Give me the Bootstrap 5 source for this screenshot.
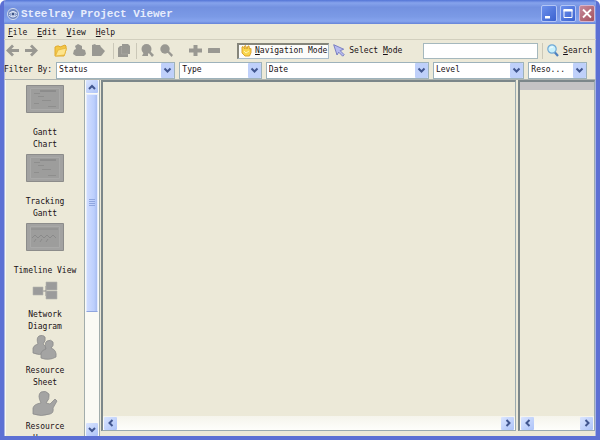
<!DOCTYPE html>
<html lang="en">
<head>
<meta charset="utf-8">
<meta name="viewport" content="width=device-width, initial-scale=1">
<title>Steelray Project Viewer</title>
<link href="https://cdn.jsdelivr.net/npm/bootstrap@5.3.0/dist/css/bootstrap.min.css" rel="stylesheet">
<style>
body { font-family: "DejaVu Sans Mono", "Liberation Mono", monospace; font-size: 8px; line-height: 12px; color: #181014; background: #fff; }
button, input, select { font: inherit; color: inherit; }
svg { display: block; flex: none; }
.app-window { background: #ece9d8; border: 4px solid #5c70d4; border-top: 0; border-radius: 6px 6px 0 0; box-shadow: inset 1px 0 #a9b4e0, inset -1px 0 #a9b4e0; }
.title-strip { height: 24px; margin: 0 -4px; padding: 3px 5px 0 7px; background: linear-gradient(#5374d6, #86a3ec 12%, #7391e0 30%, #7b9ae6 70%, #86a4ee 88%, #6683d8); color: #e6ecfc; gap: 2px; }
.title-text { font-family: "Liberation Mono", monospace; font-size: 11px; font-weight: 700; margin: 0; line-height: 16px; }
.win-btns { gap: 3px; }
.win-btn { width: 16px; height: 17px; padding: 0; border: 1px solid #b4c6f6; border-radius: 2px; background: linear-gradient(135deg, #6c90ec, #3b62cf); }
.win-btn.win-close { background: linear-gradient(135deg, #c68a9c, #a4525e); border-color: #d6b4cc; }
.menu-strip { height: 16px; padding: 3px 4px 0; border-bottom: 1px solid #d2cfbe; gap: 10px; }
.menu-strip a { color: inherit; text-decoration: none; }
.tool-strip { height: 21px; padding: 0 4px 0 2px; color: #999892; }
.tool-group { gap: 6px; }
.tool-btn { border: 0; background: none; padding: 0; color: inherit; }
.tool-sep { width: 1px; height: 16px; background: #cbc8b8; }
.text-btn { color: #181014; gap: 4px; }
.nav-mode { background: #fcfcfa; border: 1px solid #a9bccb; border-top: 2px solid #85857a; border-left: 2px solid #85857a; height: 16px; padding: 0 1px 0 2px; gap: 3px; }
.search-box { flex: 0 1 115px; min-width: 0; height: 16px; border: 1px solid #a5b8bd; background: #fff; padding: 0 3px; border-radius: 0; }
.filter-strip { height: 18px; padding: 0 9px 0 0; gap: 4px; }
.filter-label { width: 48px; flex: none; white-space: nowrap; }
.combo { min-width: 0; height: 17px; }
.combo select { appearance: none; width: 100%; height: 17px; border: 1px solid #9db2bb; background: #fff; border-radius: 0; padding: 0 14px 0 2px; display: block; }
.combo svg { position: absolute; right: 1px; top: 1px; pointer-events: none; }
.c-status { flex: 120 1 0; } .c-type { flex: 83 1 0; } .c-date { flex: 164 1 0; } .c-level { flex: 92 1 0; } .c-res { flex: 59 1 0; }
.work-area { min-height: 0; border-top: 1px solid #aeb4b0; }
.side-pane { width: 95px; flex: none; border-left: 1px solid #f8f8f4; margin: 0 1px; }
.view-list { padding-top: 4px; gap: 2px; }
.view-list button { border: 0; background: none; padding: 0; width: 78px; display: flex; flex-direction: column; align-items: center; color: inherit; flex: none; }
.v-bar { width: 16px; border-left: 1px solid #a2adac; border-right: 1px solid #a2adac; background: #fafaf4; padding: 0 1px; flex: none; }
.v-thumb { height: 218px; margin-top: 1px; background: linear-gradient(90deg, #cfdcff, #bccffd 70%, #a9bdf0); border: 1px solid #e4ecff; border-bottom-color: #8fa5de; color: #8fa6df; }
.arrow-btn { padding: 0; border: 0; background: linear-gradient(135deg, #dae5ff, #adc3f8); color: #41568f; width: 13px; height: 13px; display: flex; align-items: center; justify-content: center; flex: none; border-radius: 1px; }
.doc-pane { min-width: 0; border: 1px solid #9aaab0; border-top: 2px solid #7c878a; border-left: 2px solid #7c878a; margin: 0 2px 5px 0; }
.h-bar { height: 14px; background: linear-gradient(#f5f4ec, #fefefb); padding: 0 1px; }
.detail-pane { width: 77px; flex: none; margin-right: 1px; }
.detail-head { height: 8px; background: #c4c3c4; }
</style>
</head>
<body>
<div class="app-window vh-100 d-flex flex-column overflow-hidden">
  <header class="title-strip d-flex align-items-center flex-shrink-0">
    <svg width="12" height="12" viewBox="0 0 12 12" fill="none"><circle cx="6" cy="6" r="5.5" fill="#6e86bd" stroke="#d2dcef"/><path d="M2 5.5Q6 1.5 10 5.5M2 7Q6 11 10 7" stroke="#e8eefc"/><circle cx="6" cy="6" r="2" fill="#3d5488" stroke="#dce6f8"/></svg>
    <h1 class="title-text">Steelray Project Viewer</h1>
    <div class="win-btns d-flex ms-auto">
      <button class="win-btn" aria-label="Minimize"><svg width="14" height="15" viewBox="0 0 14 15"><path d="M3 10h5v2.5H3z" fill="#fff"/></svg></button>
      <button class="win-btn" aria-label="Maximize"><svg width="14" height="15" viewBox="0 0 14 15"><path d="M3 4h8v7.5H3z" fill="none" stroke="#fff"/><path d="M2.5 3h9v2.5h-9z" fill="#fff"/></svg></button>
      <button class="win-btn win-close" aria-label="Close"><svg width="14" height="15" viewBox="0 0 14 15"><path d="M3 3.5l8 8M11 3.5l-8 8" stroke="#fff" stroke-width="1.8"/></svg></button>
    </div>
  </header>
  <nav class="menu-strip d-flex flex-shrink-0" aria-label="Main menu">
    <a href="#"><u>F</u>ile</a><a href="#"><u>E</u>dit</a><a href="#"><u>V</u>iew</a><a href="#"><u>H</u>elp</a>
  </nav>
  <div class="tool-strip d-flex align-items-center flex-shrink-0">
    <div class="tool-group d-flex">
      <button class="tool-btn" aria-label="Back"><svg width="13" height="13" viewBox="0 0 13 13"><path d="M7 1.5L2 6.5l5 5M2.5 6.5H13" fill="none" stroke="currentColor" stroke-width="2.8"/></svg></button>
      <button class="tool-btn" aria-label="Forward"><svg width="13" height="13" viewBox="0 0 13 13"><path d="M6 1.5l5 5-5 5M10.5 6.5H0" fill="none" stroke="currentColor" stroke-width="2.8"/></svg></button>
    </div>
    <div class="tool-group d-flex ms-3">
      <button class="tool-btn" aria-label="Open"><svg width="13" height="13" viewBox="0 0 13 13"><path d="M1 12V3l2-1h2l1 1 5-2 1 1v4l-2 6z" fill="#f3c746" stroke="#e0a92e"/><path d="M1.5 12L4 6l8.5-2-2 7z" fill="#fde48c" stroke="#e5b43b" stroke-width=".8"/></svg></button>
      <button class="tool-btn" aria-label="Export project"><svg width="13" height="13" viewBox="0 0 13 13" fill="currentColor"><path d="M2 2l3-2 4 2v3l3 1 1 4-2 2H3L0 10l1-4 2-1z"/></svg></button>
      <button class="tool-btn" aria-label="Export page"><svg width="13" height="13" viewBox="0 0 13 13" fill="currentColor"><path d="M0 1l3-1 1 1h4l1 2 1 1 3 3-3 4-1 1H0z"/></svg></button>
    </div>
    <span class="tool-sep ms-2"></span>
    <button class="tool-btn mx-1" aria-label="Copy"><svg width="14" height="13" viewBox="0 0 14 13" fill="currentColor"><path d="M4 0h6l2 2v8h-2v3H0V4l2-2h2z"/><path d="M3.500 3v7H10" fill="none" stroke="#b0afa8" stroke-width=".6"/></svg></button>
    <span class="tool-sep me-1"></span>
    <div class="tool-group d-flex">
      <button class="tool-btn" aria-label="Zoom in"><svg width="13" height="13" viewBox="0 0 13 13" fill="currentColor"><circle cx="5.5" cy="5" r="5"/><path d="M3 8h4v4H1zM7 8l2-1 4 4-2 2z"/></svg></button>
      <button class="tool-btn" aria-label="Zoom out"><svg width="13" height="13" viewBox="0 0 13 13" fill="currentColor"><circle cx="5" cy="5" r="4.7"/><path d="M7 8l1.5-1.5L13 11l-1.5 2z"/></svg></button>
    </div>
    <div class="tool-group d-flex ms-3">
      <button class="tool-btn" aria-label="Add"><svg width="13" height="13" viewBox="0 0 13 13" fill="currentColor"><path d="M4.5 1h4v3.500H13v4H8.500V12h-4V8.500H0v-4h4.500z"/></svg></button>
      <button class="tool-btn" aria-label="Remove"><svg width="13" height="13" viewBox="0 0 13 13" fill="currentColor"><rect y="4" width="12" height="5" rx=".5"/></svg></button>
    </div>
    <button class="tool-btn text-btn nav-mode d-flex align-items-center ms-3"><svg width="11" height="12" viewBox="0 0 11 12"><path d="M1 2l1-.5L4 4l-.5-3 1-.5L6 4l1-3h1l.5 3L10 3.500v4L8.500 11H4L1 8z" fill="#f9d64d" stroke="#d99c26" stroke-width=".9"/><path d="M3 6l2 2 3-2" fill="none" stroke="#fff3b0"/></svg><span><u>N</u>avigation Mode</span></button>
    <button class="tool-btn text-btn d-flex align-items-center ms-1"><svg width="12" height="13" viewBox="0 0 12 13"><path d="M.7.7l10 4.500-3.500 1.500 4 4-1.500 1.500-4-4L4 11z" fill="#b8bcf0" stroke="#7277bd" stroke-width=".9"/></svg><span>Select <u>M</u>ode</span></button>
    <input class="search-box ms-auto" type="text" aria-label="Search text">
    <span class="tool-sep ms-1 me-1"></span>
    <button class="tool-btn text-btn d-flex align-items-center"><svg width="12" height="13" viewBox="0 0 12 13"><path d="M7.500 8l3.500 4" stroke="#4f80bd" stroke-width="2.200"/><circle cx="5" cy="5" r="4.200" fill="#c9f1fc" stroke="#6fa8d6" stroke-width="1.200"/><path d="M3 4.500Q4 2.500 6 3" stroke="#fff" fill="none"/></svg><span><u>S</u>earch</span></button>
  </div>
  <div class="filter-strip d-flex align-items-center flex-shrink-0">
    <label class="filter-label" for="f-status">Filter By:</label>
    <div class="combo c-status position-relative"><select id="f-status"><option>Status</option></select><svg width="13" height="15" viewBox="0 0 13 15"><use href="#drop"/></svg></div>
    <div class="combo c-type position-relative"><select aria-label="Type"><option>Type</option></select><svg width="13" height="15" viewBox="0 0 13 15"><use href="#drop"/></svg></div>
    <div class="combo c-date position-relative"><select aria-label="Date"><option>Date</option></select><svg width="13" height="15" viewBox="0 0 13 15"><use href="#drop"/></svg></div>
    <div class="combo c-level position-relative"><select aria-label="Level"><option>Level</option></select><svg width="13" height="15" viewBox="0 0 13 15"><use href="#drop"/></svg></div>
    <div class="combo c-res position-relative"><select aria-label="Resource"><option>Reso...</option></select><svg width="13" height="15" viewBox="0 0 13 15"><use href="#drop"/></svg></div>
  </div>
  <main class="work-area d-flex flex-grow-1">
    <aside class="side-pane d-flex">
      <div class="view-list d-flex flex-column flex-grow-1 overflow-hidden">
        <button><svg width="38" height="43" viewBox="0 0 38 43"><use href="#frame"/><use href="#bars"/></svg><span>Gantt<br>Chart</span></button>
        <button><svg width="38" height="43" viewBox="0 0 38 43"><use href="#frame"/><use href="#bars"/></svg><span>Tracking<br>Gantt</span></button>
        <button><svg width="38" height="43" viewBox="0 0 38 43"><use href="#frame"/><path d="M5 7h27" stroke="#8c8c8c"/><path d="M6 16l3-3 3 3 3-3 3 3 3-3 3 3 3-3 3 3M8 20l2-3M14 20l2-3M20 20l2-3" stroke="#8a8a8a" fill="none"/></svg><span>Timeline View</span></button>
        <button><svg width="26" height="30" viewBox="0 0 26 30"><path d="M11 12h3V7h3M14 12v5h3" fill="none" stroke="#8c8c8c"/><path d="M1 8h10v8H1zM14 3h11v8H14zM14 12h11v8H14z" fill="#9b9b9b" stroke="#b6b5ae" stroke-width=".6"/></svg><span>Network<br>Diagram</span></button>
        <button><svg width="26" height="30" viewBox="0 0 26 30"><g fill="#a4a4a3" stroke="#8c8c8b" stroke-width=".8"><path d="M1 13q1-3 5-4-2-6 1-8 4-2 6 1 1 4-2 7l3 3v6q-7 3-13 0z"/><path d="M9 18q1-3 5-4-2-6 1-8 4-2 6 1 1 4-2 6 6 2 5 9-7 4-15 1z"/></g></svg><span>Resource<br>Sheet</span></button>
        <button><svg width="26" height="30" viewBox="0 0 26 30"><path d="M1 17q1-4 8-5-4-8 0-11 5-2 8 2 1 5-3 9l4 1 5-5 2 2-4 7q1 5-3 6-9 3-17 0z" fill="#a4a4a3" stroke="#8c8c8b" stroke-width=".8"/></svg><span>Resource<br>Usage</span></button>
      </div>
      <div class="v-bar d-flex flex-column">
        <button class="arrow-btn w-100" aria-label="Scroll up"><svg width="8" height="8" viewBox="0 0 8 8"><path d="M1 6l3-3 3 3" fill="none" stroke="currentColor" stroke-width="2"/></svg></button>
        <div class="v-thumb d-flex align-items-center justify-content-center"><svg width="6" height="8" viewBox="0 0 6 8"><path d="M0 .5h6M0 2.500h6M0 4.500h6M0 6.500h6" stroke="currentColor"/></svg></div>
        <button class="arrow-btn w-100 mt-auto" aria-label="Scroll down"><svg width="8" height="8" viewBox="0 0 8 8"><path d="M1 2l3 3 3-3" fill="none" stroke="currentColor" stroke-width="2"/></svg></button>
      </div>
    </aside>
    <section class="doc-pane d-flex flex-column flex-grow-1" aria-label="Project view">
      <div class="h-bar d-flex justify-content-between align-items-center mt-auto">
        <button class="arrow-btn" aria-label="Scroll left"><svg width="8" height="8" viewBox="0 0 8 8"><path d="M5.500 1l-3 3 3 3" fill="none" stroke="currentColor" stroke-width="2"/></svg></button>
        <button class="arrow-btn" aria-label="Scroll right"><svg width="8" height="8" viewBox="0 0 8 8"><path d="M2.500 1l3 3-3 3" fill="none" stroke="currentColor" stroke-width="2"/></svg></button>
      </div>
    </section>
    <section class="doc-pane detail-pane d-flex flex-column" aria-label="Details">
      <div class="detail-head"></div>
      <div class="h-bar d-flex justify-content-between align-items-center mt-auto">
        <button class="arrow-btn" aria-label="Scroll left"><svg width="8" height="8" viewBox="0 0 8 8"><path d="M5.500 1l-3 3 3 3" fill="none" stroke="currentColor" stroke-width="2"/></svg></button>
        <button class="arrow-btn" aria-label="Scroll right"><svg width="8" height="8" viewBox="0 0 8 8"><path d="M2.500 1l3 3-3 3" fill="none" stroke="currentColor" stroke-width="2"/></svg></button>
      </div>
    </section>
  </main>
</div>
<svg width="0" height="0" class="position-absolute" aria-hidden="true">
  <defs>
    <g id="drop"><rect width="13" height="15" rx="1" fill="#bfd0fa"/><path d="M3.500 5.500l3 3 3-3" fill="none" stroke="#41568f" stroke-width="2"/></g>
    <g id="frame"><path d="M.5 1.500h37v27H.5z" fill="#a2a2a1" stroke="#8c8c8b"/><path d="M4.500 4.500h29v21h-29z" fill="#9d9d9c" stroke="#a9a9a8"/></g>
    <g id="bars"><path d="M14 7h16" stroke="#7d7d7d"/><path d="M8 9.500h6M12 12.500h6M16 16.500h9M8 19.500h5M22 22.500h8" stroke="#8e8e8d"/></g>
  </defs>
</svg>
<script src="https://cdn.jsdelivr.net/npm/bootstrap@5.3.0/dist/js/bootstrap.bundle.min.js"></script>
</body>
</html>
